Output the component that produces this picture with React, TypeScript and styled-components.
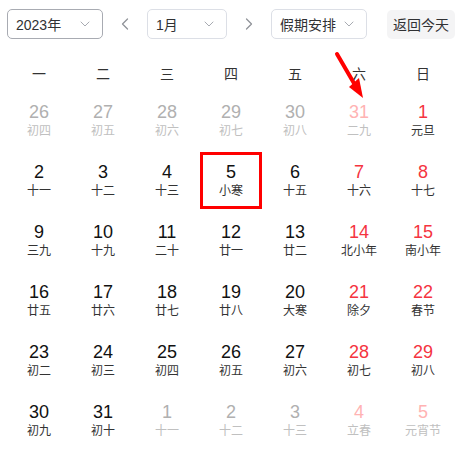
import React from 'react';
import styled, { createGlobalStyle } from 'styled-components';
import { ChevronDown, ChevronLeft, ChevronRight } from 'lucide-react';

const GlobalStyle = createGlobalStyle`
  body {
    margin: 0;
    background: #fff;
    font-family: "Liberation Sans", "Noto Sans CJK SC", sans-serif;
  }
`;

const Page = styled.div`
  position: relative;
  width: 466px;
  height: 449px;
  padding: 9px 7px 0;
  box-sizing: border-box;
`;

const Toolbar = styled.div`
  display: flex;
  align-items: center;
  height: 30px;
`;

const Select = styled.div<{ $width: number; $active?: boolean }>`
  display: flex;
  align-items: center;
  justify-content: space-between;
  width: ${(p) => p.$width}px;
  height: 30px;
  box-sizing: border-box;
  padding: 0 9px 0 8px;
  border: 1px solid ${(p) => (p.$active ? '#a8abb2' : '#dcdfe6')};
  border-radius: 5px;
  font-size: 14px;
  color: #303133;
  svg {
    color: #a8abb2;
  }
`;

const NavButton = styled.div`
  display: flex;
  align-items: center;
  justify-content: center;
  width: 20px;
  margin: 0 12px;
  color: #909399;
`;

const TodayButton = styled.div`
  display: flex;
  align-items: center;
  justify-content: center;
  margin-left: 20px;
  width: 68px;
  height: 29px;
  border-radius: 5px;
  background: #f4f4f5;
  font-size: 14px;
  color: #303133;
`;

const WeekRow = styled.div`
  display: grid;
  grid-template-columns: repeat(7, 64px);
  margin-top: 19px;
  margin-bottom: 4px;
  height: 30px;
`;

const WeekDay = styled.div`
  display: flex;
  align-items: center;
  justify-content: center;
  font-size: 14px;
  color: #333;
`;

const Grid = styled.div`
  display: grid;
  grid-template-columns: repeat(7, 64px);
  grid-auto-rows: 60px;
`;

const Cell = styled.div<{ $selected?: boolean }>`
  position: relative;
  display: flex;
  flex-direction: column;
  align-items: center;
  padding-top: 10px;
  box-sizing: border-box;
  &::after {
    content: '';
    display: ${(p) => (p.$selected ? 'block' : 'none')};
    position: absolute;
    top: 0;
    left: 1px;
    right: 1px;
    bottom: 3px;
    border: 3px solid #f00;
  }
`;

const DayNum = styled.div<{ $tone: string }>`
  font-size: 18px;
  line-height: 20px;
  color: ${(p) => p.$tone};
`;

const Lunar = styled.div<{ $faded: boolean }>`
  font-size: 12px;
  line-height: 18px;
  color: ${(p) => (p.$faded ? '#c0c0c0' : '#333')};
`;

const Arrow = styled.svg`
  position: absolute;
  left: 330px;
  top: 48px;
`;

type Day = { n: number; lunar: string; other?: boolean };

const days: Day[] = [
  { n: 26, lunar: '初四', other: true },
  { n: 27, lunar: '初五', other: true },
  { n: 28, lunar: '初六', other: true },
  { n: 29, lunar: '初七', other: true },
  { n: 30, lunar: '初八', other: true },
  { n: 31, lunar: '二九', other: true },
  { n: 1, lunar: '元旦' },
  { n: 2, lunar: '十一' },
  { n: 3, lunar: '十二' },
  { n: 4, lunar: '十三' },
  { n: 5, lunar: '小寒' },
  { n: 6, lunar: '十五' },
  { n: 7, lunar: '十六' },
  { n: 8, lunar: '十七' },
  { n: 9, lunar: '三九' },
  { n: 10, lunar: '十九' },
  { n: 11, lunar: '二十' },
  { n: 12, lunar: '廿一' },
  { n: 13, lunar: '廿二' },
  { n: 14, lunar: '北小年' },
  { n: 15, lunar: '南小年' },
  { n: 16, lunar: '廿五' },
  { n: 17, lunar: '廿六' },
  { n: 18, lunar: '廿七' },
  { n: 19, lunar: '廿八' },
  { n: 20, lunar: '大寒' },
  { n: 21, lunar: '除夕' },
  { n: 22, lunar: '春节' },
  { n: 23, lunar: '初二' },
  { n: 24, lunar: '初三' },
  { n: 25, lunar: '初四' },
  { n: 26, lunar: '初五' },
  { n: 27, lunar: '初六' },
  { n: 28, lunar: '初七' },
  { n: 29, lunar: '初八' },
  { n: 30, lunar: '初九' },
  { n: 31, lunar: '初十' },
  { n: 1, lunar: '十一', other: true },
  { n: 2, lunar: '十二', other: true },
  { n: 3, lunar: '十三', other: true },
  { n: 4, lunar: '立春', other: true },
  { n: 5, lunar: '元宵节', other: true },
];

const weekDays = ['一', '二', '三', '四', '五', '六', '日'];

function toneFor(d: Day, col: number): string {
  const weekend = col >= 5;
  if (d.other) return weekend ? '#ffb3b3' : '#b0b0b0';
  return weekend ? '#f5343f' : '#111';
}

export default function App(): JSX.Element {
  return (
    <Page>
      <GlobalStyle />
      <Toolbar>
        <Select $width={96} $active>
          <span>2023年</span>
          <ChevronDown size={16} strokeWidth={1.5} />
        </Select>
        <NavButton>
          <ChevronLeft size={22} strokeWidth={1.5} />
        </NavButton>
        <Select $width={80}>
          <span>1月</span>
          <ChevronDown size={16} strokeWidth={1.5} />
        </Select>
        <NavButton>
          <ChevronRight size={22} strokeWidth={1.5} />
        </NavButton>
        <Select $width={96}>
          <span>假期安排</span>
          <ChevronDown size={16} strokeWidth={1.5} />
        </Select>
        <TodayButton>返回今天</TodayButton>
      </Toolbar>
      <WeekRow>
        {weekDays.map((w) => (
          <WeekDay key={w}>{w}</WeekDay>
        ))}
      </WeekRow>
      <Grid>
        {days.map((d, i) => (
          <Cell key={i} $selected={!d.other && d.n === 5}>
            <DayNum $tone={toneFor(d, i % 7)}>{d.n}</DayNum>
            <Lunar $faded={!!d.other}>{d.lunar}</Lunar>
          </Cell>
        ))}
      </Grid>
      <Arrow width="40" height="56" viewBox="0 0 40 56">
        <line x1="7" y1="6" x2="25" y2="37" stroke="#f00" strokeWidth="4" strokeLinecap="round" />
        <polygon points="33,50 19,39 29,30" fill="#f00" />
      </Arrow>
    </Page>
  );
}
